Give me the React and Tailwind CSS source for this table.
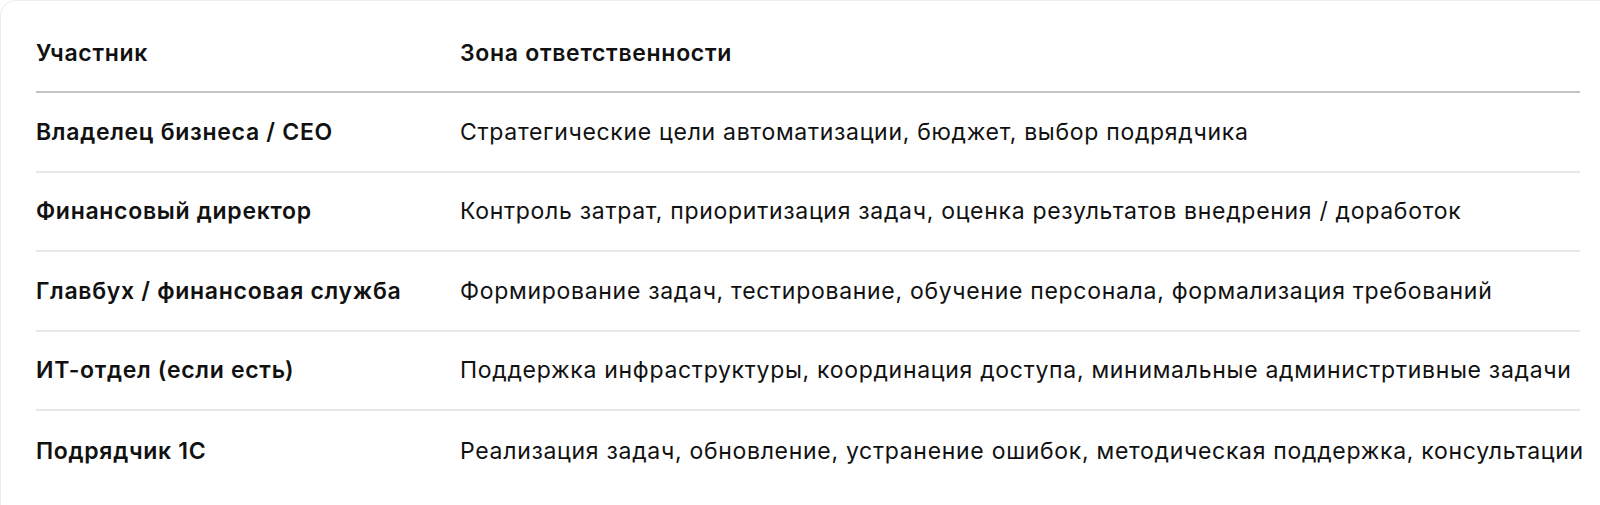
import React from 'react';

const rows = [
    ['Владелец бизнеса / CEO', 'Стратегические цели автоматизации, бюджет, выбор подрядчика'],
    ['Финансовый директор', 'Контроль затрат, приоритизация задач, оценка результатов внедрения / доработок'],
    ['Главбух / финансовая служба', 'Формирование задач, тестирование, обучение персонала, формализация требований'],
    ['ИТ-отдел (если есть)', 'Поддержка инфраструктуры, координация доступа, минимальные администртивные задачи'],
    ['Подрядчик 1С', 'Реализация задач, обновление, устранение ошибок, методическая поддержка, консультации'],
];

export default function App() {
    return (
        <div className="w-full h-[505px] overflow-hidden bg-white font-['Inter',sans-serif] text-[#111] text-[23px] leading-[28px] tracking-[0.7px]">
            {/* Card - only the top-left corner is in frame */}
            <div className="h-full border-l border-t border-[#ececec] rounded-tl-[16px] pl-[35px] pr-[20px]">
                <div className="flex border-b-2 border-[#c4c4c4] pt-[38px] pb-[24px] font-semibold">
                    <div className="w-[424px] shrink-0">Участник</div>
                    <div>Зона ответственности</div>
                </div>

                {rows.map(([who, what], i) => (
                    <div
                        key={who}
                        className={`flex items-center h-[79.5px] ${i < rows.length - 1 ? 'border-b-2 border-[#e8e8e8]' : ''}`}
                    >
                        <div className="w-[424px] shrink-0 font-semibold">{who}</div>
                        <div className="whitespace-nowrap">{what}</div>
                    </div>
                ))}
            </div>
        </div>
    );
}
